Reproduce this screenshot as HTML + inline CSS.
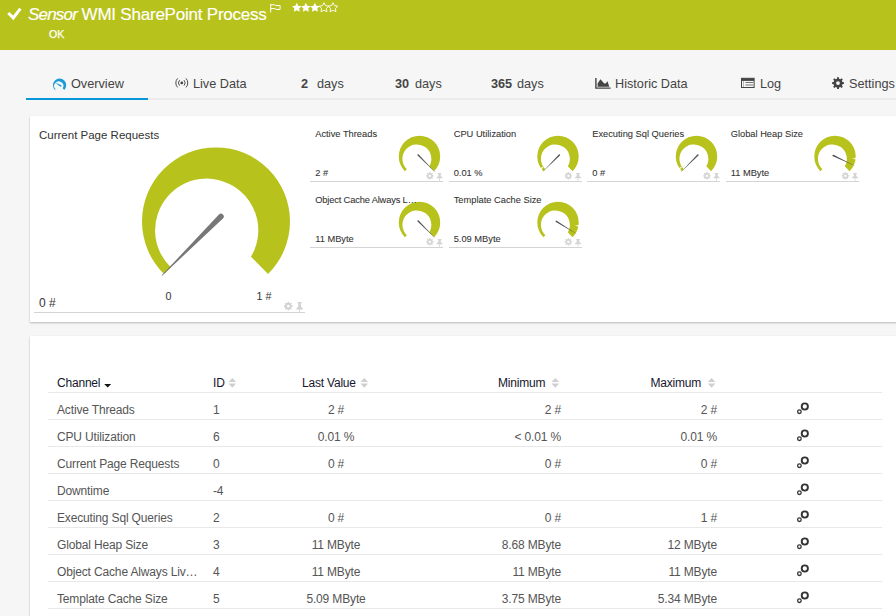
<!DOCTYPE html>
<html><head><meta charset="utf-8">
<style>
*{margin:0;padding:0;box-sizing:border-box}
html,body{width:896px;height:616px;overflow:hidden}
body{background:#f6f6f6;font-family:"Liberation Sans",sans-serif;position:relative;color:#333}
.a{position:absolute;white-space:nowrap}
#hdr{position:absolute;left:0;top:0;width:896px;height:50px;background:#b8c21c}
#title{left:28px;top:4.5px;font-size:17px;letter-spacing:-0.22px;color:#fff;line-height:20px;-webkit-text-stroke:0.15px #fff}
#ok{left:49px;top:27.8px;font-size:10.6px;color:#fff;line-height:12px;-webkit-text-stroke:0.25px #fff}
.tab{top:77px;font-size:12.7px;color:#444;line-height:15px}
#tabline{left:26px;top:98px;width:870px;height:2px;background:#ebebeb}
#tabblue{left:26px;top:98px;width:122px;height:2px;background:#0897d6}
.panel{position:absolute;background:#fff;box-shadow:0 1px 2px rgba(0,0,0,.25)}
.gt{font-size:9.3px;color:#333;line-height:10px;-webkit-text-stroke:0.08px #333}
.gl{height:1px;background:#d4d4d4}
.th{font-size:12px;letter-spacing:-0.2px;color:#16162c;line-height:14px;top:375.5px}
.td{font-size:12px;letter-spacing:-0.15px;color:#555;line-height:14px}
.rl{left:48px;width:834px;height:1px;background:#e8e8e8}
.c{text-align:center;width:120px}
.r{text-align:right;width:120px}
</style></head><body>
<div id="hdr"></div>
<svg class="a" style="left:0;top:0" width="30" height="30"><path d="M8.3 13L13.3 17.9L20.4 8.6" stroke="#fff" stroke-width="3" fill="none"/></svg>
<div class="a" id="title"><i style="letter-spacing:-0.8px">Sensor</i> WMI SharePoint Process</div>
<div class="a" id="ok">OK</div>

<svg class="a" style="left:0;top:0" width="896" height="50">
<path d="M270.7 4v8.5M270.7 4.8h4.2l1 0.8h4.2v3.8h-4.2l-1-0.8h-4.2" stroke="#fff" stroke-width="1" fill="none"/>
<path d="M296.80 2.70L298.27 5.68L301.56 6.15L299.18 8.47L299.74 11.75L296.80 10.20L293.86 11.75L294.42 8.47L292.04 6.15L295.33 5.68Z" fill="#fff"/>
<path d="M305.85 2.70L307.32 5.68L310.61 6.15L308.23 8.47L308.79 11.75L305.85 10.20L302.91 11.75L303.47 8.47L301.09 6.15L304.38 5.68Z" fill="#fff"/>
<path d="M314.90 2.70L316.37 5.68L319.66 6.15L317.28 8.47L317.84 11.75L314.90 10.20L311.96 11.75L312.52 8.47L310.14 6.15L313.43 5.68Z" fill="#fff"/>
<path d="M323.95 2.70L325.42 5.68L328.71 6.15L326.33 8.47L326.89 11.75L323.95 10.20L321.01 11.75L321.57 8.47L319.19 6.15L322.48 5.68Z" fill="none" stroke="#fff" stroke-width="0.9"/>
<path d="M333.00 2.70L334.47 5.68L337.76 6.15L335.38 8.47L335.94 11.75L333.00 10.20L330.06 11.75L330.62 8.47L328.24 6.15L331.53 5.68Z" fill="none" stroke="#fff" stroke-width="0.9"/>
</svg>
<div class="a" id="tabline"></div>
<div class="a" id="tabblue"></div>
<div class="a tab" style="left:71px">Overview</div>
<div class="a tab" style="left:193px">Live Data</div>
<div class="a tab" style="left:301px"><b>2</b></div><div class="a tab" style="left:317px">days</div>
<div class="a tab" style="left:395px"><b>30</b></div><div class="a tab" style="left:415px">days</div>
<div class="a tab" style="left:491px"><b>365</b></div><div class="a tab" style="left:517px">days</div>
<div class="a tab" style="left:615px">Historic Data</div>
<div class="a tab" style="left:760px">Log</div>
<div class="a tab" style="left:849px">Settings</div>

<svg class="a" style="left:0;top:60px" width="896" height="40" viewBox="0 60 896 40">
<g transform="translate(59.6 85.2) scale(0.0892)"><path d="M-52.05 52.60A74 74 0 1 1 52.05 52.60L34.96 35.33A51.6 51.6 0 1 0 -45.30 45.77Z" fill="#1a9bd7"/><path transform="rotate(209.8)" d="M62 0L-14-9A9 9 0 0 0-14 9Z" fill="#1a9bd7"/></g>
<g fill="none" stroke="#4a4a4a" stroke-width="1"><path d="M179.6 80.2A4 4 0 0 0 179.6 85.6"/><path d="M177.6 78.4A6.6 6.6 0 0 0 177.6 87.4"/><path d="M184 80.2A4 4 0 0 1 184 85.6"/><path d="M186 78.4A6.6 6.6 0 0 1 186 87.4"/></g><circle cx="181.8" cy="82.9" r="1.4" fill="#444"/>
<path d="M595.2 78h1.4v9.5h14v1.3h-15.4z" fill="#444"/><path d="M597.6 86.8V83.4L600.4 79.2 604.3 83.4H605.6L607.5 81.2 609.3 86.8z" fill="#444"/>
<rect x="741.5" y="78.3" width="12.6" height="9.2" fill="none" stroke="#444" stroke-width="1"/><rect x="741.5" y="78.3" width="12.6" height="2.6" fill="#444"/><path d="M745.5 82.5h7.5M745.5 85h7.5" stroke="#666" stroke-width="0.9"/><path d="M743.5 81v6" stroke="#aaa" stroke-width="0.8"/>
<path d="M836.94 78.67L837.06 77.17L838.94 77.17L839.06 78.67L840.38 79.21L841.53 78.25L842.85 79.57L841.89 80.72L842.43 82.04L843.93 82.16L843.93 84.04L842.43 84.16L841.89 85.48L842.85 86.63L841.53 87.95L840.38 86.99L839.06 87.53L838.94 89.03L837.06 89.03L836.94 87.53L835.62 86.99L834.47 87.95L833.15 86.63L834.11 85.48L833.57 84.16L832.07 84.04L832.07 82.16L833.57 82.04L834.11 80.72L833.15 79.57L834.47 78.25L835.62 79.21ZM839.92 83.10A1.92 1.92 0 1 0 836.08 83.10A1.92 1.92 0 1 0 839.92 83.10Z" fill="#444" fill-rule="evenodd"/>
</svg>
<div class="panel" style="left:30px;top:116px;width:880px;height:206px"></div>
<div class="panel" style="left:30px;top:336px;width:880px;height:300px"></div>
<div class="a" style="left:39px;top:128px;font-size:11.5px;color:#333;line-height:14px">Current Page Requests</div>
<div class="a" style="left:39px;top:296px;font-size:12px;color:#333;line-height:14px">0 #</div>
<div class="a" style="left:165.5px;top:290px;font-size:10.8px;color:#333;line-height:12px">0</div>
<div class="a" style="left:256.5px;top:290px;font-size:10.8px;color:#333;line-height:12px">1 #</div>
<div class="a gl" style="left:34px;top:312px;width:271px"></div>
<svg class="a" style="left:0;top:116px" width="896" height="206" viewBox="0 116 896 206">
<g transform="translate(216 221.4)"><path d="M-52.05 52.60A74 74 0 1 1 52.05 52.60L34.96 35.33A51.6 51.6 0 1 0 -45.30 45.77Z" fill="#b8c21c"/><path transform="rotate(135.00)" d="M76.5 0.3L76.5-0.3L-7-2.8A2.8 2.8 0 0 0-7 2.8Z" fill="#777"/></g>
<path d="M287.52 302.95L287.61 301.85L288.99 301.85L289.08 302.95L290.05 303.35L290.89 302.64L291.86 303.61L291.15 304.45L291.55 305.42L292.65 305.51L292.65 306.89L291.55 306.98L291.15 307.95L291.86 308.79L290.89 309.76L290.05 309.05L289.08 309.45L288.99 310.55L287.61 310.55L287.52 309.45L286.55 309.05L285.71 309.76L284.74 308.79L285.45 307.95L285.05 306.98L283.95 306.89L283.95 305.51L285.05 305.42L285.45 304.45L284.74 303.61L285.71 302.64L286.55 303.35ZM289.71 306.20A1.41 1.41 0 1 0 286.89 306.20A1.41 1.41 0 1 0 289.71 306.20Z" fill="#d2d2d2" fill-rule="evenodd"/>
<path d="M297.50 302.10h4.2v1.2h-0.8v3.2l1.9 1.9v1h-2.8v3.2l-0.4 0.9-0.4-0.9v-3.2h-2.8v-1l1.9-1.9v-3.2h-0.8z" fill="#d2d2d2"/>
<g transform="translate(419.5 156.4) scale(0.28)"><path d="M-52.05 52.60A74 74 0 1 1 52.05 52.60L34.96 35.33A51.6 51.6 0 1 0 -45.30 45.77Z" fill="#b8c21c"/><path transform="rotate(405.00)" d="M82 0L-7-2.9A2.9 2.9 0 0 0-7 2.9Z" fill="#555"/></g>
<path d="M429.23 173.04L429.31 172.10L430.49 172.10L430.57 173.04L431.41 173.39L432.13 172.78L432.97 173.62L432.36 174.34L432.71 175.18L433.65 175.26L433.65 176.44L432.71 176.52L432.36 177.36L432.97 178.08L432.13 178.92L431.41 178.31L430.57 178.66L430.49 179.60L429.31 179.60L429.23 178.66L428.39 178.31L427.67 178.92L426.83 178.08L427.44 177.36L427.09 176.52L426.15 176.44L426.15 175.26L427.09 175.18L427.44 174.34L426.83 173.62L427.67 172.78L428.39 173.39ZM431.12 175.85A1.22 1.22 0 1 0 428.68 175.85A1.22 1.22 0 1 0 431.12 175.85Z" fill="#d4d4d4" fill-rule="evenodd"/>
<g transform="translate(436.40 172.90) scale(0.95 0.72)"><path d="M1.20 0.00h4.2v1.2h-0.8v3.2l1.9 1.9v1h-2.8v3.2l-0.4 0.9-0.4-0.9v-3.2h-2.8v-1l1.9-1.9v-3.2h-0.8z" fill="#d4d4d4"/></g>
<g transform="translate(558.0 156.4) scale(0.28)"><path d="M-52.05 52.60A74 74 0 1 1 52.05 52.60L34.96 35.33A51.6 51.6 0 1 0 -45.30 45.77Z" fill="#b8c21c"/><path transform="rotate(144.45)" d="M62 0L84 -5L84 5Z" fill="#fff"/><path transform="rotate(135.00)" d="M82 0L-7-2.9A2.9 2.9 0 0 0-7 2.9Z" fill="#555"/></g>
<path d="M567.73 173.04L567.81 172.10L568.99 172.10L569.07 173.04L569.91 173.39L570.63 172.78L571.47 173.62L570.86 174.34L571.21 175.18L572.15 175.26L572.15 176.44L571.21 176.52L570.86 177.36L571.47 178.08L570.63 178.92L569.91 178.31L569.07 178.66L568.99 179.60L567.81 179.60L567.73 178.66L566.89 178.31L566.17 178.92L565.33 178.08L565.94 177.36L565.59 176.52L564.65 176.44L564.65 175.26L565.59 175.18L565.94 174.34L565.33 173.62L566.17 172.78L566.89 173.39ZM569.62 175.85A1.22 1.22 0 1 0 567.18 175.85A1.22 1.22 0 1 0 569.62 175.85Z" fill="#d4d4d4" fill-rule="evenodd"/>
<g transform="translate(574.90 172.90) scale(0.95 0.72)"><path d="M1.20 0.00h4.2v1.2h-0.8v3.2l1.9 1.9v1h-2.8v3.2l-0.4 0.9-0.4-0.9v-3.2h-2.8v-1l1.9-1.9v-3.2h-0.8z" fill="#d4d4d4"/></g>
<g transform="translate(696.5 156.4) scale(0.28)"><path d="M-52.05 52.60A74 74 0 1 1 52.05 52.60L34.96 35.33A51.6 51.6 0 1 0 -45.30 45.77Z" fill="#b8c21c"/><path transform="rotate(144.45)" d="M62 0L84 -5L84 5Z" fill="#fff"/><path transform="rotate(135.00)" d="M82 0L-7-2.9A2.9 2.9 0 0 0-7 2.9Z" fill="#555"/></g>
<path d="M706.23 173.04L706.31 172.10L707.49 172.10L707.57 173.04L708.41 173.39L709.13 172.78L709.97 173.62L709.36 174.34L709.71 175.18L710.65 175.26L710.65 176.44L709.71 176.52L709.36 177.36L709.97 178.08L709.13 178.92L708.41 178.31L707.57 178.66L707.49 179.60L706.31 179.60L706.23 178.66L705.39 178.31L704.67 178.92L703.83 178.08L704.44 177.36L704.09 176.52L703.15 176.44L703.15 175.26L704.09 175.18L704.44 174.34L703.83 173.62L704.67 172.78L705.39 173.39ZM708.12 175.85A1.22 1.22 0 1 0 705.68 175.85A1.22 1.22 0 1 0 708.12 175.85Z" fill="#d4d4d4" fill-rule="evenodd"/>
<g transform="translate(713.40 172.90) scale(0.95 0.72)"><path d="M1.20 0.00h4.2v1.2h-0.8v3.2l1.9 1.9v1h-2.8v3.2l-0.4 0.9-0.4-0.9v-3.2h-2.8v-1l1.9-1.9v-3.2h-0.8z" fill="#d4d4d4"/></g>
<g transform="translate(835.0 156.4) scale(0.28)"><path d="M-52.05 52.60A74 74 0 1 1 52.05 52.60L34.96 35.33A51.6 51.6 0 1 0 -45.30 45.77Z" fill="#b8c21c"/><path transform="rotate(366.12)" d="M62 0L84 -5L84 5Z" fill="#fff"/><path transform="rotate(385.56)" d="M82 0L-7-2.9A2.9 2.9 0 0 0-7 2.9Z" fill="#555"/></g>
<path d="M844.73 173.04L844.81 172.10L845.99 172.10L846.07 173.04L846.91 173.39L847.63 172.78L848.47 173.62L847.86 174.34L848.21 175.18L849.15 175.26L849.15 176.44L848.21 176.52L847.86 177.36L848.47 178.08L847.63 178.92L846.91 178.31L846.07 178.66L845.99 179.60L844.81 179.60L844.73 178.66L843.89 178.31L843.17 178.92L842.33 178.08L842.94 177.36L842.59 176.52L841.65 176.44L841.65 175.26L842.59 175.18L842.94 174.34L842.33 173.62L843.17 172.78L843.89 173.39ZM846.62 175.85A1.22 1.22 0 1 0 844.18 175.85A1.22 1.22 0 1 0 846.62 175.85Z" fill="#d4d4d4" fill-rule="evenodd"/>
<g transform="translate(851.90 172.90) scale(0.95 0.72)"><path d="M1.20 0.00h4.2v1.2h-0.8v3.2l1.9 1.9v1h-2.8v3.2l-0.4 0.9-0.4-0.9v-3.2h-2.8v-1l1.9-1.9v-3.2h-0.8z" fill="#d4d4d4"/></g>
<g transform="translate(419.5 222.4) scale(0.28)"><path d="M-52.05 52.60A74 74 0 1 1 52.05 52.60L34.96 35.33A51.6 51.6 0 1 0 -45.30 45.77Z" fill="#b8c21c"/><path transform="rotate(405.00)" d="M82 0L-7-2.9A2.9 2.9 0 0 0-7 2.9Z" fill="#555"/></g>
<path d="M429.23 239.04L429.31 238.10L430.49 238.10L430.57 239.04L431.41 239.39L432.13 238.78L432.97 239.62L432.36 240.34L432.71 241.18L433.65 241.26L433.65 242.44L432.71 242.52L432.36 243.36L432.97 244.08L432.13 244.92L431.41 244.31L430.57 244.66L430.49 245.60L429.31 245.60L429.23 244.66L428.39 244.31L427.67 244.92L426.83 244.08L427.44 243.36L427.09 242.52L426.15 242.44L426.15 241.26L427.09 241.18L427.44 240.34L426.83 239.62L427.67 238.78L428.39 239.39ZM431.12 241.85A1.22 1.22 0 1 0 428.68 241.85A1.22 1.22 0 1 0 431.12 241.85Z" fill="#d4d4d4" fill-rule="evenodd"/>
<g transform="translate(436.40 238.90) scale(0.95 0.72)"><path d="M1.20 0.00h4.2v1.2h-0.8v3.2l1.9 1.9v1h-2.8v3.2l-0.4 0.9-0.4-0.9v-3.2h-2.8v-1l1.9-1.9v-3.2h-0.8z" fill="#d4d4d4"/></g>
<g transform="translate(558.0 222.4) scale(0.28)"><path d="M-52.05 52.60A74 74 0 1 1 52.05 52.60L34.96 35.33A51.6 51.6 0 1 0 -45.30 45.77Z" fill="#b8c21c"/><path transform="rotate(369.90)" d="M62 0L84 -5L84 5Z" fill="#fff"/><path transform="rotate(392.04)" d="M82 0L-7-2.9A2.9 2.9 0 0 0-7 2.9Z" fill="#555"/></g>
<path d="M567.73 239.04L567.81 238.10L568.99 238.10L569.07 239.04L569.91 239.39L570.63 238.78L571.47 239.62L570.86 240.34L571.21 241.18L572.15 241.26L572.15 242.44L571.21 242.52L570.86 243.36L571.47 244.08L570.63 244.92L569.91 244.31L569.07 244.66L568.99 245.60L567.81 245.60L567.73 244.66L566.89 244.31L566.17 244.92L565.33 244.08L565.94 243.36L565.59 242.52L564.65 242.44L564.65 241.26L565.59 241.18L565.94 240.34L565.33 239.62L566.17 238.78L566.89 239.39ZM569.62 241.85A1.22 1.22 0 1 0 567.18 241.85A1.22 1.22 0 1 0 569.62 241.85Z" fill="#d4d4d4" fill-rule="evenodd"/>
<g transform="translate(574.90 238.90) scale(0.95 0.72)"><path d="M1.20 0.00h4.2v1.2h-0.8v3.2l1.9 1.9v1h-2.8v3.2l-0.4 0.9-0.4-0.9v-3.2h-2.8v-1l1.9-1.9v-3.2h-0.8z" fill="#d4d4d4"/></g>
</svg>
<div class="a gt" style="left:315.2px;top:128.5px">Active Threads</div>
<div class="a gt" style="left:315.2px;top:167.5px">2 #</div>
<div class="a gl" style="left:310.2px;top:181.0px;width:133px"></div>
<div class="a gt" style="left:453.7px;top:128.5px">CPU Utilization</div>
<div class="a gt" style="left:453.7px;top:167.5px">0.01 %</div>
<div class="a gl" style="left:448.7px;top:181.0px;width:133px"></div>
<div class="a gt" style="left:592.2px;top:128.5px">Executing Sql Queries</div>
<div class="a gt" style="left:592.2px;top:167.5px">0 #</div>
<div class="a gl" style="left:587.2px;top:181.0px;width:133px"></div>
<div class="a gt" style="left:730.7px;top:128.5px">Global Heap Size</div>
<div class="a gt" style="left:730.7px;top:167.5px">11 MByte</div>
<div class="a gl" style="left:725.7px;top:181.0px;width:133px"></div>
<div class="a gt" style="left:315.2px;top:194.5px"><span style="letter-spacing:-0.15px">Object Cache Always L</span>&hellip;</div>
<div class="a gt" style="left:315.2px;top:233.5px">11 MByte</div>
<div class="a gl" style="left:310.2px;top:247.0px;width:133px"></div>
<div class="a gt" style="left:453.7px;top:194.5px">Template Cache Size</div>
<div class="a gt" style="left:453.7px;top:233.5px">5.09 MByte</div>
<div class="a gl" style="left:448.7px;top:247.0px;width:133px"></div>
<div class="a th" style="left:57px">Channel</div>
<div class="a th" style="left:213px">ID</div>
<div class="a th" style="left:302px">Last Value</div>
<div class="a th" style="left:498px">Minimum</div>
<div class="a th" style="left:650.5px">Maximum</div>
<div class="a rl" style="top:392px"></div>
<svg class="a" style="left:0;top:336px" width="896" height="280" viewBox="0 336 896 280">
<path d="M104.2 384H111.2L107.7 387.6Z" fill="#111"/>
<path d="M228.5 382H236.1L232.3 378Z M228.5 383.6H236.1L232.3 387.8Z" fill="#cfcfcf"/>
<path d="M360.5 382H368.1L364.3 378Z M360.5 383.6H368.1L364.3 387.8Z" fill="#cfcfcf"/>
<path d="M551.5 382H559.1L555.3 378Z M551.5 383.6H559.1L555.3 387.8Z" fill="#cfcfcf"/>
<path d="M707.8 382H715.4L711.5999999999999 378Z M707.8 383.6H715.4L711.5999999999999 387.8Z" fill="#cfcfcf"/>
<circle cx="804.8" cy="406.5" r="3.1" fill="none" stroke="#333" stroke-width="1.9"/>
<circle cx="799.4" cy="411.7" r="1.8" fill="none" stroke="#333" stroke-width="1.3"/>
<circle cx="804.8" cy="433.5" r="3.1" fill="none" stroke="#333" stroke-width="1.9"/>
<circle cx="799.4" cy="438.7" r="1.8" fill="none" stroke="#333" stroke-width="1.3"/>
<circle cx="804.8" cy="460.5" r="3.1" fill="none" stroke="#333" stroke-width="1.9"/>
<circle cx="799.4" cy="465.7" r="1.8" fill="none" stroke="#333" stroke-width="1.3"/>
<circle cx="804.8" cy="487.5" r="3.1" fill="none" stroke="#333" stroke-width="1.9"/>
<circle cx="799.4" cy="492.7" r="1.8" fill="none" stroke="#333" stroke-width="1.3"/>
<circle cx="804.8" cy="514.5" r="3.1" fill="none" stroke="#333" stroke-width="1.9"/>
<circle cx="799.4" cy="519.7" r="1.8" fill="none" stroke="#333" stroke-width="1.3"/>
<circle cx="804.8" cy="541.5" r="3.1" fill="none" stroke="#333" stroke-width="1.9"/>
<circle cx="799.4" cy="546.7" r="1.8" fill="none" stroke="#333" stroke-width="1.3"/>
<circle cx="804.8" cy="568.5" r="3.1" fill="none" stroke="#333" stroke-width="1.9"/>
<circle cx="799.4" cy="573.7" r="1.8" fill="none" stroke="#333" stroke-width="1.3"/>
<circle cx="804.8" cy="595.5" r="3.1" fill="none" stroke="#333" stroke-width="1.9"/>
<circle cx="799.4" cy="600.7" r="1.8" fill="none" stroke="#333" stroke-width="1.3"/>
</svg>
<div class="a td" style="left:57px;top:402.5px">Active Threads</div>
<div class="a td" style="left:213px;top:402.5px">1</div>
<div class="a td c" style="left:276px;top:402.5px">2 #</div>
<div class="a td r" style="left:441px;top:402.5px">2 #</div>
<div class="a td r" style="left:597px;top:402.5px">2 #</div>
<div class="a rl" style="top:419.0px"></div>
<div class="a td" style="left:57px;top:429.5px">CPU Utilization</div>
<div class="a td" style="left:213px;top:429.5px">6</div>
<div class="a td c" style="left:276px;top:429.5px">0.01 %</div>
<div class="a td r" style="left:441px;top:429.5px">&lt; 0.01 %</div>
<div class="a td r" style="left:597px;top:429.5px">0.01 %</div>
<div class="a rl" style="top:446.0px"></div>
<div class="a td" style="left:57px;top:456.5px">Current Page Requests</div>
<div class="a td" style="left:213px;top:456.5px">0</div>
<div class="a td c" style="left:276px;top:456.5px">0 #</div>
<div class="a td r" style="left:441px;top:456.5px">0 #</div>
<div class="a td r" style="left:597px;top:456.5px">0 #</div>
<div class="a rl" style="top:473.0px"></div>
<div class="a td" style="left:57px;top:483.5px">Downtime</div>
<div class="a td" style="left:213px;top:483.5px">-4</div>
<div class="a td c" style="left:276px;top:483.5px"></div>
<div class="a td r" style="left:441px;top:483.5px"></div>
<div class="a td r" style="left:597px;top:483.5px"></div>
<div class="a rl" style="top:500.0px"></div>
<div class="a td" style="left:57px;top:510.5px">Executing Sql Queries</div>
<div class="a td" style="left:213px;top:510.5px">2</div>
<div class="a td c" style="left:276px;top:510.5px">0 #</div>
<div class="a td r" style="left:441px;top:510.5px">0 #</div>
<div class="a td r" style="left:597px;top:510.5px">1 #</div>
<div class="a rl" style="top:527.0px"></div>
<div class="a td" style="left:57px;top:537.5px">Global Heap Size</div>
<div class="a td" style="left:213px;top:537.5px">3</div>
<div class="a td c" style="left:276px;top:537.5px">11 MByte</div>
<div class="a td r" style="left:441px;top:537.5px">8.68 MByte</div>
<div class="a td r" style="left:597px;top:537.5px">12 MByte</div>
<div class="a rl" style="top:554.0px"></div>
<div class="a td" style="left:57px;top:564.5px">Object Cache Always Liv&hellip;</div>
<div class="a td" style="left:213px;top:564.5px">4</div>
<div class="a td c" style="left:276px;top:564.5px">11 MByte</div>
<div class="a td r" style="left:441px;top:564.5px">11 MByte</div>
<div class="a td r" style="left:597px;top:564.5px">11 MByte</div>
<div class="a rl" style="top:581.0px"></div>
<div class="a td" style="left:57px;top:591.5px">Template Cache Size</div>
<div class="a td" style="left:213px;top:591.5px">5</div>
<div class="a td c" style="left:276px;top:591.5px">5.09 MByte</div>
<div class="a td r" style="left:441px;top:591.5px">3.75 MByte</div>
<div class="a td r" style="left:597px;top:591.5px">5.34 MByte</div>
<div class="a rl" style="top:608.0px"></div>
</body></html>
